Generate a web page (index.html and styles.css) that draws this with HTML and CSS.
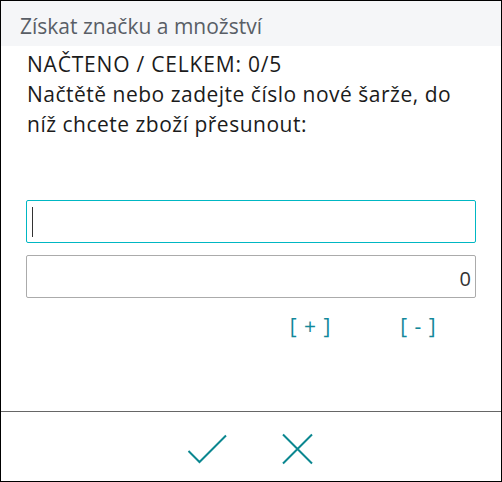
FILE: index.html
```html
<!DOCTYPE html>
<html lang="cs">
<head>
<meta charset="utf-8">
<title>Získat značku a množství</title>
<link rel="stylesheet" href="styles.css">
</head>
<body>
<div class="dialog">
  <div class="header">Získat značku a množství</div>
  <div class="content">
    <div class="text status">NAČTENO / CELKEM: 0/5</div>
    <div class="text desc">Načtětě nebo zadejte číslo nové šarže, do níž chcete zboží přesunout:</div>
    <div class="fields">
      <div class="field focused"><span class="caret"></span></div>
      <div class="field number">0</div>
    </div>
    <div class="steps">
      <span class="step">[ + ]</span>
      <span class="step">[ - ]</span>
    </div>
  </div>
  <div class="footer">
    <svg class="icon" width="40" height="30" viewBox="0 0 40 30">
      <polyline points="1.5,17 12.5,28 39,1.5" fill="none" stroke="#0b8790" stroke-width="2"/>
    </svg>
    <svg class="icon" width="31" height="32" viewBox="0 0 31 32">
      <path d="M1 1.5 L30 30.5 M30 1.5 L1 30.5" fill="none" stroke="#0b8790" stroke-width="2"/>
    </svg>
  </div>
</div>
</body>
</html>
```
FILE: styles.css
```css
* { box-sizing: border-box; }
html, body { margin: 0; padding: 0; background: #fff; }
body { font-family: "Open Sans", "Noto Sans", sans-serif; }
.dialog {
  width: 502px;
  height: 482px;
  border: 1px solid #000;
  display: flex;
  flex-direction: column;
}
.header {
  height: 45px;
  background: #f5f6f8;
  color: #595e66;
  font-size: 21px;
  line-height: 39px;
  padding: 6px 0 0 19px;
}
.content {
  flex: 1;
  padding: 3px 25px 0 25px;
  display: flex;
  flex-direction: column;
}
.text {
  font-size: 21px;
  line-height: 30px;
  color: #1b1b1b;
  padding-left: 1px;
}
.status { letter-spacing: 0.8px; }
.desc { letter-spacing: 0.5px; }
.fields {
  margin-top: 61px;
  display: flex;
  flex-direction: column;
  gap: 12px;
}
.field {
  height: 43px;
  border: 1px solid #ababab;
  border-radius: 2px;
  font-size: 20px;
  color: #333;
  display: flex;
  align-items: center;
  padding: 0 4px 0 5px;
}
.field.focused { border-color: #00b7c3; }
.field.number { justify-content: flex-end; padding-top: 3px; }
.caret {
  width: 1px;
  height: 30px;
  background: #333;
}
.steps {
  margin-top: 15px;
  display: flex;
  justify-content: flex-end;
  padding-right: 4px;
}
.step {
  width: 108px;
  text-align: center;
  font-size: 21px;
  line-height: 26px;
  color: #12889a;
  word-spacing: 2px;
}
.footer {
  height: 70px;
  border-top: 1px solid #666;
  display: flex;
  justify-content: center;
  align-items: center;
  gap: 55px;
  padding: 4px 3px 0 0;
}
.icon { display: block; }
```
